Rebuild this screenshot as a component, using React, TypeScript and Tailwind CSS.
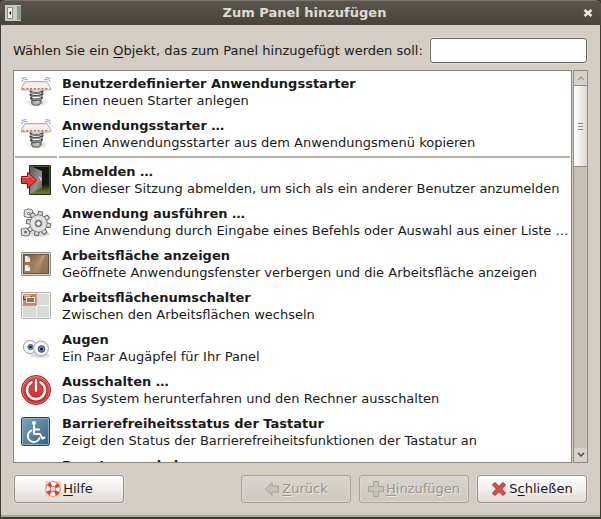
import type { ReactNode } from "react";

type Applet = { title: string; text: string; icon: ReactNode };

function SpringIcon() {
  return (
    <svg viewBox="0 0 32 32" className="size-8" aria-hidden>
      <defs>
        <radialGradient id="springShadow">
          <stop offset="0" stopColor="#777" stopOpacity=".5" />
          <stop offset="1" stopColor="#777" stopOpacity="0" />
        </radialGradient>
      </defs>
      <ellipse cx="17" cy="26.500" rx="12" ry="4.500" fill="url(#springShadow)" />
      <g fill="none" strokeLinecap="round">
        <path d="M10.500 15c0 3 12 2 12 0M10.500 18.500c1 2.500 11 1.500 12-.5M11 22c1 2.500 10 1.500 11-.5M12 25.500c0-2 9-1 9-2.500" stroke="#4a4e48" strokeWidth="2.200" />
        <path d="M12 25.500c0 4 4 3.500 7 3M20.500 23v4" stroke="#6c706a" strokeWidth="2" />
        <path d="M12 16.500c2 1 7 .8 9 0M12 20c2 1 7 .6 9-.4M12.500 23.300c2 1 6 .6 8-.4M12.500 26c0 2.500 2 2.500 6 2" stroke="#b4b7b1" strokeWidth=".8" />
        <path d="M2 2.500l4-1M2 5.500c0-2 2-2 5-2M30 2.500l-4-1M30 5.500c0-2-2-2-5-2" stroke="#7fa4cd" strokeWidth="1.100" />
      </g>
      <path d="M5 5.500h22l3.500 6v2.500h-29v-2.500z" fill="#f4f0ee" stroke="#b3aba9" />
      <path d="M5.500 5.800h21" stroke="#e09b9b" strokeDasharray="2 1.500" />
      <path d="M2.500 12.800h27" stroke="#d86062" strokeWidth="1.600" strokeDasharray="2 1.800" />
    </svg>
  );
}

function LogoutIcon() {
  return (
    <svg viewBox="0 0 32 32" className="size-8" aria-hidden>
      <defs>
        <linearGradient id="doorLeaf" x2="1" y2="1">
          <stop stopColor="#555753" />
          <stop offset=".6" stopColor="#90938d" />
          <stop offset="1" stopColor="#555753" />
        </linearGradient>
        <linearGradient id="doorFloor" x2="0" y2="1">
          <stop offset=".65" stopColor="#141611" />
          <stop offset="1" stopColor="#8a9218" />
        </linearGradient>
      </defs>
      <path d="M9.500 1.500h21v29h-21z" fill="url(#doorFloor)" stroke="#2a2c29" />
      <path d="M10.500 2.500h19v27h-19z" fill="none" stroke="#62645e" strokeWidth=".7" />
      <path d="M10 2l12 5v17L10 30z" fill="url(#doorLeaf)" />
      <path d="M19 13l2 1v3" fill="none" stroke="#eeeeec" />
      <path d="M1.500 12.500h6V8.300l9 8-9 8v-4.800h-6z" fill="#df3e3e" stroke="#a40000" strokeLinejoin="round" />
      <path d="M2.500 13.500h6v-2.800l6.300 5.600" fill="none" stroke="#f08b8b" strokeWidth=".8" />
    </svg>
  );
}

const teeth = [0, 45, 90, 135, 180, 225, 270, 315];

function RunIcon() {
  return (
    <svg viewBox="0 0 32 32" className="size-8" aria-hidden>
      <ellipse cx="19" cy="28" rx="11" ry="3" fill="#ddd" />
      <g fill="#dfe0dd" stroke="#6a6c67">
        <path d="M5.500 3.500l1 .5 1-1h2l1 1 1-.5 1.500 1.500-.5 1 .5 2-1 1 .5 1-1.500 1.500-1-.5-1 .5h-2l-1-1-1 .5L4 9.500l.5-1-.5-2 .5-1-.5-1z" />
        <path d="M2.500 22.500l1 .5 1-1h2l1 1 1-.5L10 24l-.5 1 .5 2-1 1 .5 1L8 30l-1-.5-1 .5H4l-1-1-1 .5-1-1.500.5-1-.5-2 .5-1-.5-1z" />
        <circle cx="8.500" cy="7.500" r="1" fill="#fff" />
        <circle cx="5.500" cy="26" r="1" fill="#555" />
      </g>
      <g transform="translate(18.500 17.500) scale(1.080)" fill="#dedfdc">
        {teeth.map((a) => (
          <path key={a} transform={`rotate(${a + 10})`} d="M-2.200-7l.4-4.200h3.600l.4 4.200z" stroke="#6a6c67" strokeLinejoin="round" />
        ))}
        <circle r="8" stroke="#6a6c67" strokeWidth=".8" />
        <circle r="7.500" />
        <circle r="5" fill="#c4c6c1" stroke="#eee" />
        <circle r="2.500" fill="#fff" stroke="#555753" />
      </g>
    </svg>
  );
}

function DesktopIcon() {
  return (
    <svg viewBox="0 0 32 32" className="size-8" aria-hidden>
      <defs>
        <linearGradient id="wood" x2="1" y2="1">
          <stop stopColor="#7e5c42" />
          <stop offset=".5" stopColor="#a3815f" />
          <stop offset="1" stopColor="#8b694b" />
        </linearGradient>
      </defs>
      <rect x="1.500" y="4.500" width="29" height="23" rx="1" fill="#d5d5d1" stroke="#888a85" />
      <rect x="3.500" y="6.500" width="25" height="19" fill="url(#wood)" stroke="#665240" />
      <path d="M19 7l-7 18h7l5-18z" fill="#b79977" opacity=".4" />
      <path d="M22 7l-4 12 8-12z" fill="#d1b38e" opacity=".4" />
      <path d="M5 8h3l2 2v4H5zM5 17h3l2 2v4H5z" fill="#f2f1ee" />
      <path d="M8 8v2h2M8 17v2h2" fill="none" stroke="#aaa" strokeWidth=".8" />
    </svg>
  );
}

function WorkspaceIcon() {
  return (
    <svg viewBox="0 0 32 32" className="size-8" aria-hidden>
      <rect x="1.500" y="2.500" width="29" height="26" rx="1" fill="#d9dad5" stroke="#b0b2ad" />
      <path d="M2 3h14v12H2z" fill="#b48e70" />
      <path d="M2.500 3.500h27v24h-27zM16.500 3v25M2 15.500h28" fill="none" stroke="#f4f4f2" />
      <path d="M1.500 2.500h15v13h-15z" fill="none" stroke="#c49d80" />
      <path d="M3.500 4.500h8v5h-8z" fill="#bc9a80" stroke="#4f4239" />
      <path d="M3 5h9" stroke="#eee" />
      <path d="M6.500 7.500h8v5h-8z" fill="#9f6f4b" stroke="#f1e9e3" />
    </svg>
  );
}

function EyesIcon() {
  return (
    <svg viewBox="0 0 32 32" className="size-8" aria-hidden>
      <defs>
        <radialGradient id="eyeball">
          <stop offset=".6" stopColor="#fff" />
          <stop offset="1" stopColor="#dcdfd9" />
        </radialGradient>
      </defs>
      <ellipse cx="20" cy="23.500" rx="10" ry="2.500" fill="#ddd" />
      <circle cx="10" cy="15" r="6.700" fill="url(#eyeball)" stroke="#a8aaa5" />
      <circle cx="10.500" cy="15" r="2.700" fill="#729fcf" stroke="#4068a0" />
      <circle cx="10.500" cy="15" r="1.300" fill="#111" />
      <circle cx="21" cy="16.500" r="7.500" fill="url(#eyeball)" stroke="#a8aaa5" />
      <circle cx="21.500" cy="17" r="3.100" fill="#729fcf" stroke="#2f5a96" strokeWidth="1.200" />
      <circle cx="21.500" cy="17" r="1.500" fill="#111" />
    </svg>
  );
}

function ShutdownIcon() {
  return (
    <svg viewBox="0 0 32 32" className="size-8" aria-hidden>
      <defs>
        <linearGradient id="power" x2="0" y2="1">
          <stop stopColor="#e65353" />
          <stop offset="1" stopColor="#c5252b" />
        </linearGradient>
      </defs>
      <circle cx="16" cy="16" r="14.500" fill="url(#power)" stroke="#a31c22" />
      <circle cx="16" cy="16" r="13.500" fill="none" stroke="#ef8585" strokeWidth=".8" />
      <g fill="none" strokeLinecap="round">
        <path d="M11.500 8.300a9 9 0 1 0 9 0M16 6v11" stroke="#ac1e24" strokeWidth="4" />
        <path d="M11.500 8.300a9 9 0 1 0 9 0M16 6v11" stroke="#f6f2f0" strokeWidth="2.600" />
      </g>
    </svg>
  );
}

function AccessIcon() {
  return (
    <svg viewBox="0 0 32 32" className="size-8" aria-hidden>
      <defs>
        <linearGradient id="access" x2="1" y2="1">
          <stop stopColor="#7ba7c5" />
          <stop offset="1" stopColor="#355f7d" />
        </linearGradient>
      </defs>
      <rect x="1.500" y="1.500" width="28" height="28" rx="2" fill="url(#access)" stroke="#343d46" />
      <rect x="2.500" y="2.500" width="26" height="26" rx="1" fill="none" stroke="#8eafc3" />
      <circle cx="14" cy="7" r="2" fill="#fff" />
      <g fill="none" stroke="#fff" strokeWidth="2" strokeLinecap="round" strokeLinejoin="round">
        <path d="M14 10v8h6l2.500 4.500 2-1M14.500 13.500H19" />
        <path d="M11.500 14.500a6 6 0 1 0 8 7.500" strokeWidth="1.800" />
      </g>
    </svg>
  );
}

const launchers: Applet[] = [
  { title: "Benutzerdefinierter Anwendungsstarter", text: "Einen neuen Starter anlegen", icon: <SpringIcon /> },
  { title: "Anwendungsstarter …", text: "Einen Anwendungsstarter aus dem Anwendungsmenü kopieren", icon: <SpringIcon /> },
];

const applets: Applet[] = [
  { title: "Abmelden …", text: "Von dieser Sitzung abmelden, um sich als ein anderer Benutzer anzumelden", icon: <LogoutIcon /> },
  { title: "Anwendung ausführen …", text: "Eine Anwendung durch Eingabe eines Befehls oder Auswahl aus einer Liste …", icon: <RunIcon /> },
  { title: "Arbeitsfläche anzeigen", text: "Geöffnete Anwendungsfenster verbergen und die Arbeitsfläche anzeigen", icon: <DesktopIcon /> },
  { title: "Arbeitsflächenumschalter", text: "Zwischen den Arbeitsflächen wechseln", icon: <WorkspaceIcon /> },
  { title: "Augen", text: "Ein Paar Augäpfel für Ihr Panel", icon: <EyesIcon /> },
  { title: "Ausschalten …", text: "Das System herunterfahren und den Rechner ausschalten", icon: <ShutdownIcon /> },
  { title: "Barrierefreiheitsstatus der Tastatur", text: "Zeigt den Status der Barrierefreiheitsfunktionen der Tastatur an", icon: <AccessIcon /> },
  { title: "Benutzerwechsler", text: "\u00a0", icon: null },
];

function AppletRow({ title, text, icon }: Applet) {
  return (
    <li className="flex h-[42px] items-center gap-2.5 pl-1.5">
      <span className="size-8 shrink-0">{icon}</span>
      <div className="min-w-0 leading-[17px]">
        <p className="truncate font-bold">{title}</p>
        <p className="truncate">{text}</p>
      </div>
    </li>
  );
}

const buttonBase = "flex h-7 w-[110px] min-w-0 items-center justify-center gap-0.5 rounded-[3px] border";
const buttonOn = "border-[#96918a] bg-linear-to-b from-white via-[#f2f0ee] to-[#dedad5] shadow-[0_0_0_1px_#dfdbd5]";
const buttonOff = "border-[#aaa49a] bg-linear-to-b from-[#d8d3cc] to-[#cec8c0] text-[#9c968b] shadow-[inset_0_0_0_1px_#dad5ce] [text-shadow:1px_1px_#e9e5df]";

export default function App() {
  return (
    <main className="flex h-screen flex-col overflow-hidden bg-[#3f3c34] font-['DejaVu_Sans',sans-serif] text-[13px] text-[#1a1a1a]">
      <header className="flex h-[25px] shrink-0 items-center rounded-t-md border-t border-[#77736a] bg-linear-to-b from-[#5b564d] to-[#48443b] px-[5px]">
        <svg viewBox="0 0 16 16" className="size-4" aria-hidden>
          <path d="M0 0h16v16H0z" fill="#c6cbc3" />
          <path d="M12 1h4v14h-4z" fill="#929b91" />
          <path d="M2.500 2.500h5v11h-5z" fill="#eee" stroke="#888a85" />
          <path d="M6 6v4L4 8z" fill="#111" />
        </svg>
        <h1 className="ml-2 flex-1 text-center font-bold text-[#dfdbd2]">Zum Panel hinzufügen</h1>
        <button aria-label="Schließen" className="flex size-4 items-center justify-center">
          <svg viewBox="0 0 10 10" className="size-2.5" aria-hidden>
            <path d="M1.500 2l7 6M8.500 2l-7 6" stroke="#eeeae2" strokeWidth="2.500" />
          </svg>
        </button>
      </header>

      <div className="mx-px mb-0.5 flex min-h-0 flex-1 flex-col border-b-2 border-[#aaa497] bg-[#d3cdc5] px-3 pt-[13px] pb-3">
        <div className="flex items-center gap-[7px] pr-px">
          <label htmlFor="search" className="whitespace-nowrap">
            Wählen Sie ein <u className="underline-offset-2">O</u>bjekt, das zum Panel hinzugefügt werden soll:
          </label>
          <input id="search" className="h-[25px] min-w-0 flex-1 rounded-[3px] border border-[#6b655c] bg-white px-1 shadow-[0_0_0_1px_#dedad4] outline-none" />
        </div>

        <div className="mt-[7px] flex min-h-0 flex-1 gap-px">
          <div className="min-w-0 flex-1 overflow-hidden border border-[#8b857b] bg-white">
            <ul>
              {launchers.map((a) => (
                <AppletRow key={a.title} {...a} />
              ))}
              <li className="flex h-1 items-center gap-0.5 px-px" role="separator">
                <span className="h-0.5 w-[42px] bg-[#b5afa6]" />
                <span className="h-0.5 flex-1 bg-[#b5afa6]" />
              </li>
              {applets.map((a) => (
                <AppletRow key={a.title} {...a} />
              ))}
            </ul>
          </div>
          <div className="flex w-[15px] shrink-0 flex-col border border-[#918b81] bg-[#c6c0b6]">
            <button aria-label="Nach oben" className="flex h-3.5 items-center justify-center bg-[#d6d1ca]">
              <svg viewBox="0 0 8 6" className="h-1.5 w-2" aria-hidden>
                <path d="M1 5l3-3 3 3" fill="none" stroke="#a49d92" strokeWidth="1.500" />
              </svg>
            </button>
            <div className="flex h-[82px] flex-col items-center justify-center gap-0.5 border-y border-[#918b81] bg-linear-to-r from-white via-[#efedea] to-[#d9d5cf]">
              <span className="h-px w-[5px] bg-[#8b857b]" />
              <span className="h-px w-[5px] bg-[#8b857b]" />
              <span className="h-px w-[5px] bg-[#8b857b]" />
            </div>
            <button aria-label="Nach unten" className="mt-auto flex h-3.5 items-center justify-center bg-[#d6d1ca]">
              <svg viewBox="0 0 8 6" className="h-1.5 w-2" aria-hidden>
                <path d="M1 1l3 3 3-3" fill="none" stroke="#4b473f" strokeWidth="1.500" />
              </svg>
            </button>
          </div>
        </div>

        <footer className="mt-3 flex gap-2 px-px">
          <button className={`${buttonBase} ${buttonOn} mr-auto`}>
            <svg viewBox="0 0 16 16" className="size-4" aria-hidden>
              <rect width="16" height="16" rx="3" fill="#f6cfa6" />
              <circle cx="8" cy="8" r="5" fill="none" stroke="#b0524a" strokeWidth="5" />
              <circle cx="8" cy="8" r="5" fill="none" stroke="#fff" strokeWidth="3.800" />
              <circle cx="8" cy="8" r="5" fill="none" stroke="#dc3a35" strokeWidth="4" strokeDasharray="3.200 4.654" strokeDashoffset="-2.327" />
            </svg>
            <span><u className="underline-offset-2">H</u>ilfe</span>
          </button>
          <button disabled className={`${buttonBase} ${buttonOff}`}>
            <svg viewBox="0 0 16 16" className="size-4" aria-hidden>
              <path d="M1.500 8L8 1.500v3.500h6.500v6H8v3.500z" fill="#c4c1b8" stroke="#a7a59b" />
            </svg>
            <span><u className="underline-offset-2">Z</u>urück</span>
          </button>
          <button disabled className={`${buttonBase} ${buttonOff}`}>
            <svg viewBox="0 0 16 16" className="size-4" aria-hidden>
              <path d="M5.500.5h5v5h5v5h-5v5h-5v-5h-5v-5h5z" fill="#c5c4ba" stroke="#a7a69b" />
            </svg>
            <span><u className="underline-offset-2">H</u>inzufügen</span>
          </button>
          <button className={`${buttonBase} ${buttonOn}`}>
            <svg viewBox="0 0 16 16" className="size-4" aria-hidden>
              <path d="M4 1.500l4 4 4-4L14.500 4l-4 4 4 4-2.500 2.500-4-4-4 4L1.500 12l4-4-4-4z" fill="#df4a4a" stroke="#a62027" strokeLinejoin="round" />
            </svg>
            <span>S<u className="underline-offset-2">c</u>hließen</span>
          </button>
        </footer>
      </div>
    </main>
  );
}
